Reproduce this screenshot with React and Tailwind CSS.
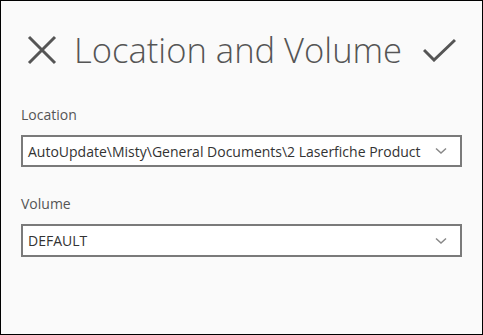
import React from "react";

function Chevron() {
  return (
    <svg width="12" height="8" viewBox="0 0 12 8" fill="none" stroke="#888" strokeWidth="1.5">
      <path d="M1 1.5 L6 6 L11 1.5" />
    </svg>
  );
}

export default function App() {
  return (
    <div className="w-[483px] h-[335px] border border-black bg-[#fafafa] box-border flex flex-col" style={{ fontFamily: '"Open Sans", "Noto Sans", sans-serif' }}>
      <div className="flex items-center h-[46px] mt-[26px] pl-[26px] pr-[26px]">
        <svg width="30" height="30" viewBox="0 0 30 30" stroke="#555" strokeWidth="3" fill="none">
          <path d="M2 2 L28 28 M28 2 L2 28" />
        </svg>
        <div className="ml-[17px] text-[34.6px] font-light text-[#555] leading-none flex-1 whitespace-nowrap">Location and Volume</div>
        <svg width="33" height="24" viewBox="0 0 33 24" stroke="#555" strokeWidth="3" fill="none">
          <path d="M1 12 L11 22 L32 2" />
        </svg>
      </div>
      <div className="px-[20px] mt-[32px] flex flex-col">
        <div className="text-[14px] text-[#555] leading-[20px]">Location</div>
        <div className="mt-[10px] h-[32px] border-2 border-[#7a7a7a] bg-white flex items-center pl-[5px] pr-[13px]">
          <div className="flex-1 whitespace-nowrap text-[14px] text-[#333]">AutoUpdate\Misty\General Documents\2 Laserfiche Product</div>
          <div className="ml-[8px]"><Chevron /></div>
        </div>
        <div className="text-[14px] text-[#555] leading-[20px] mt-[27px]">Volume</div>
        <div className="mt-[10px] h-[33px] border-2 border-[#7a7a7a] bg-white flex items-center pl-[5px] pr-[13px]">
          <div className="flex-1 text-[14px] text-[#333]">DEFAULT</div>
          <Chevron />
        </div>
      </div>
    </div>
  );
}
